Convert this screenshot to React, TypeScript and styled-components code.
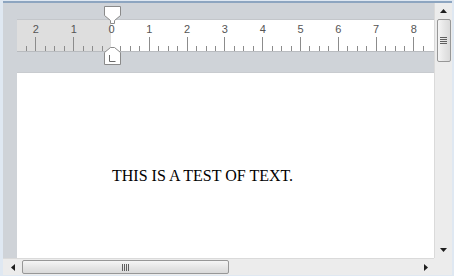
import React from "react";
import styled, { createGlobalStyle } from "styled-components";

const GlobalStyle = createGlobalStyle`
  html, body {
    margin: 0;
    padding: 0;
    background: #ffffff;
  }
`;

const Frame = styled.div`
  width: 454px;
  height: 276px;
  box-sizing: border-box;
  padding: 1px 2px 3px 3px;
  background: #dfe8f2;
`;

const Grid = styled.div`
  height: 100%;
  display: grid;
  grid-template-columns: 1fr 18px;
  grid-template-rows: 1fr 17px;
  border-top: 2px solid #8da5c0;
`;

const Workspace = styled.div`
  background: #cfd3d8;
  display: flex;
  flex-direction: column;
  padding-left: 14px;
  padding-top: 16px;
  min-height: 0;
  overflow: hidden;
`;

const RulerBar = styled.div`
  position: relative;
  height: 33px;
  box-sizing: border-box;
  border-top: 1px solid #c3c6ca;
  border-bottom: 1px solid #b8bbbf;
  background: #ffffff;
`;

const Page = styled.div`
  flex: 1;
  margin-top: 20px;
  background: #ffffff;
  border-top: 1px solid #c8cbcf;
  padding: 94px 0 0 95px;
  font-family: "Liberation Serif", "Times New Roman", serif;
  font-size: 16px;
  line-height: 18px;
  color: #000000;
`;

const Marker = styled.svg<{ $top: number }>`
  position: absolute;
  left: 87px;
  top: ${(p) => p.$top}px;
  overflow: visible;
`;

const VScroll = styled.div`
  background: #ececec;
  border-left: 1px solid #dadada;
  display: flex;
  flex-direction: column;
  align-items: center;
`;

const HScroll = styled.div`
  background: #ececec;
  border-top: 1px solid #dadada;
  display: flex;
  align-items: center;
`;

const Corner = styled.div`
  background: #ececec;
`;

const ArrowBox = styled.div<{ $w: number; $h: number }>`
  width: ${(p) => p.$w}px;
  height: ${(p) => p.$h}px;
  flex: none;
  display: flex;
  align-items: center;
  justify-content: center;
`;

const Thumb = styled.div<{ $vertical?: boolean }>`
  box-sizing: border-box;
  border: 1px solid #979797;
  border-radius: 2px;
  background: ${(p) =>
    p.$vertical
      ? "linear-gradient(to right, #f5f5f5, #e6e6e6 50%, #dadada)"
      : "linear-gradient(to bottom, #f5f5f5, #e6e6e6 50%, #dadada)"};
  display: flex;
  align-items: center;
  justify-content: center;
  flex: none;
`;

const Spacer = styled.div`
  flex: 1;
`;

const UNIT = 37.8;
const ZERO = 94;
const RULER_W = 416;

function Ruler() {
  const ticks: React.ReactNode[] = [];
  for (let i = -10; i <= 36; i++) {
    const x = Math.round(ZERO + i * (UNIT / 4)) + 0.5;
    if (x < 1 || x > RULER_W - 1) continue;
    const major = i % 4 === 0;
    if (major && i !== 0) {
      ticks.push(<line key={i} x1={x} x2={x} y1={17} y2={31} stroke="#8c8c8c" strokeWidth={1} />);
    } else if (!major) {
      ticks.push(<line key={i} x1={x} x2={x} y1={26} y2={31} stroke="#8c8c8c" strokeWidth={1} />);
    }
  }
  const labels: React.ReactNode[] = [];
  for (let n = -2; n <= 8; n++) {
    const x = ZERO + n * UNIT + 0.5;
    labels.push(
      <text
        key={n}
        x={x}
        y={12.5}
        textAnchor="middle"
        fontFamily="'Liberation Sans', Arial, sans-serif"
        fontSize={11}
        fill="#555555"
      >
        {Math.abs(n)}
      </text>
    );
  }
  return (
    <RulerBar>
      <svg width={RULER_W} height={31} style={{ display: "block" }}>
        <rect x={0} y={0} width={ZERO} height={31} fill="#dedede" />
        {ticks}
        {labels}
      </svg>
      <Marker $top={-14} width={17} height={17}>
        <path
          d="M0.5,0.5 H16.5 V9.5 L10.5,14.5 V17.5 H6.5 V14.5 L0.5,9.5 Z"
          fill="#ffffff"
          stroke="#8a8a8a"
        />
      </Marker>
      <Marker $top={27} width={17} height={18}>
        <path
          d="M6.5,0.5 H10.5 L16.5,5.5 V17.5 H0.5 V5.5 Z"
          fill="#ffffff"
          stroke="#8a8a8a"
        />
        <path d="M5.5,8 V14.5 H11.5" fill="none" stroke="#6a6a6a" />
      </Marker>
    </RulerBar>
  );
}

function Arrow({ dir }: { dir: "up" | "down" | "left" | "right" }) {
  const paths = {
    up: "M0,4 L3.5,0 L7,4 Z",
    down: "M0,0 L7,0 L3.5,4 Z",
    left: "M4,0 L4,7 L0,3.5 Z",
    right: "M0,0 L4,3.5 L0,7 Z",
  };
  const vertical = dir === "up" || dir === "down";
  return (
    <svg width={vertical ? 7 : 4} height={vertical ? 4 : 7}>
      <path d={paths[dir]} fill="#1e1e1e" />
    </svg>
  );
}

function Gripper({ vertical }: { vertical?: boolean }) {
  return vertical ? (
    <svg width={7} height={8}>
      {[0.5, 2.5, 4.5, 6.5].map((y) => (
        <line key={y} x1={0} x2={7} y1={y} y2={y} stroke="#5f5f5f" />
      ))}
    </svg>
  ) : (
    <svg width={8} height={7}>
      {[0.5, 2.5, 4.5, 6.5].map((x) => (
        <line key={x} x1={x} x2={x} y1={0} y2={7} stroke="#5f5f5f" />
      ))}
    </svg>
  );
}

export default function App() {
  return (
    <>
      <GlobalStyle />
      <Frame>
        <Grid>
          <Workspace>
            <Ruler />
            <Page>THIS IS A TEST OF TEXT.</Page>
          </Workspace>
          <VScroll>
            <ArrowBox $w={17} $h={16}>
              <Arrow dir="up" />
            </ArrowBox>
            <Thumb $vertical style={{ width: 14, height: 43 }}>
              <Gripper vertical />
            </Thumb>
            <Spacer />
            <ArrowBox $w={17} $h={17}>
              <Arrow dir="down" />
            </ArrowBox>
          </VScroll>
          <HScroll>
            <ArrowBox $w={19} $h={16}>
              <Arrow dir="left" />
            </ArrowBox>
            <Thumb style={{ width: 207, height: 14 }}>
              <Gripper />
            </Thumb>
            <Spacer />
            <ArrowBox $w={17} $h={16}>
              <Arrow dir="right" />
            </ArrowBox>
          </HScroll>
          <Corner />
        </Grid>
      </Frame>
    </>
  );
}
